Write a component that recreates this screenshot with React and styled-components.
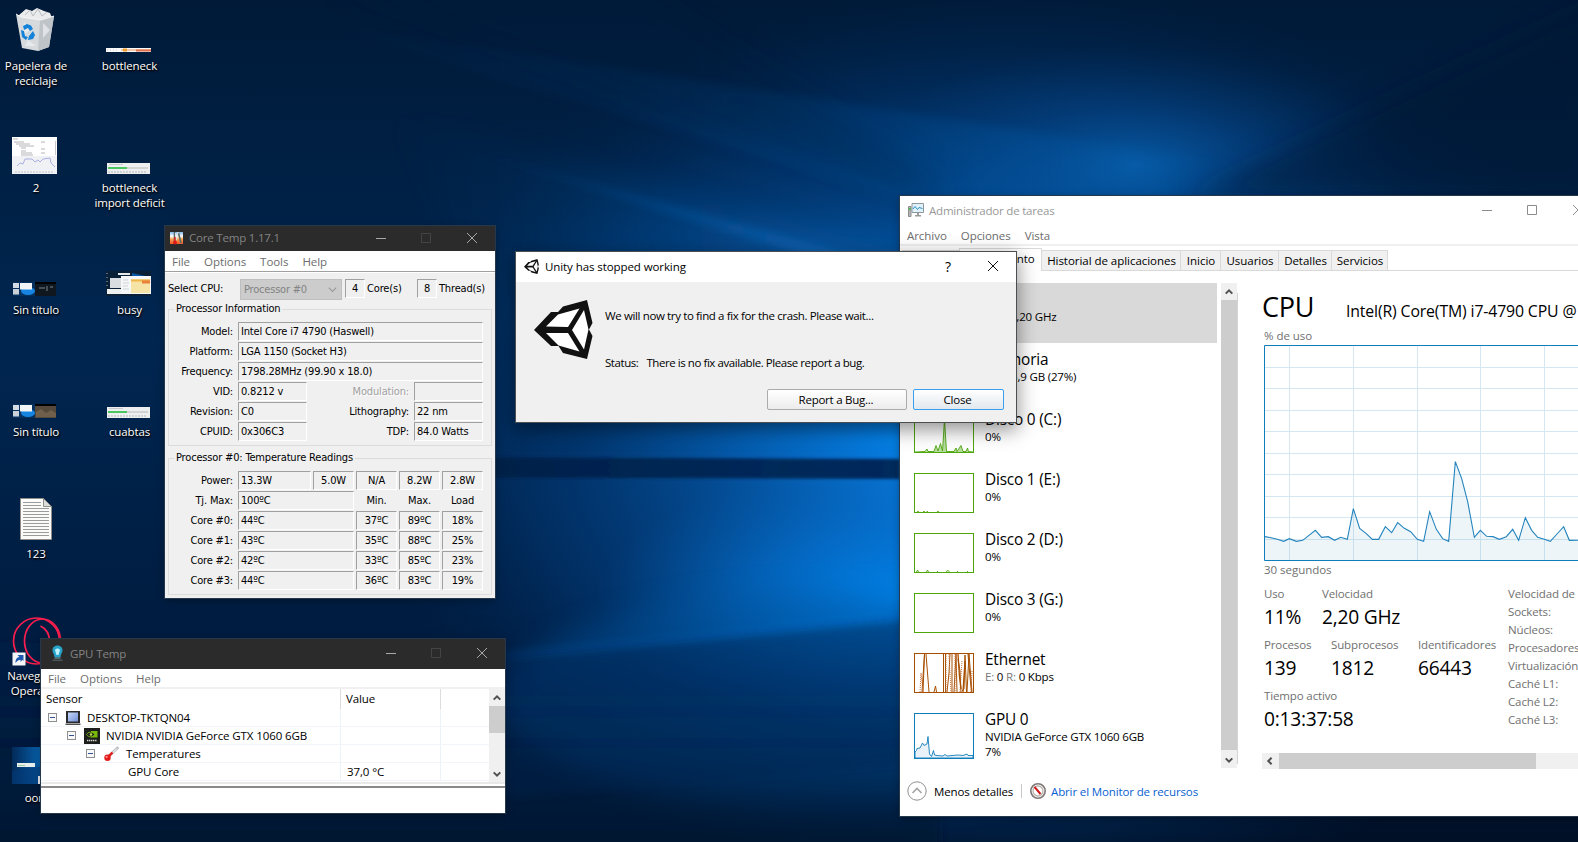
import React from "react";
import styled, { createGlobalStyle, css } from "styled-components";

const GlobalStyle = createGlobalStyle`
  *, *::before, *::after { box-sizing: border-box; }
  html, body { margin: 0; padding: 0; overflow: hidden; background: #001530; }
`;

const segoe = (size) => css`
  font-family: "Open Sans", "Noto Sans", sans-serif;
  font-size: ${size * 0.96}px;
  letter-spacing: -0.012em;
`;

const tahoma = css`
  font-family: "DejaVu Sans Condensed", "DejaVu Sans", sans-serif;
  font-stretch: condensed;
  font-size: 11px;
  letter-spacing: -0.17px;
`;

/* ---------- desktop ---------- */

const Desktop = styled.div`
  position: relative;
  width: 1578px;
  height: 842px;
  overflow: hidden;
  white-space: nowrap;
  color: #000;
  ${segoe(12)}
`;

const WallpaperSvg = styled.svg`
  position: absolute;
  inset: 0;
  display: block;
`;

const IconGrid = styled.div`
  position: relative;
  display: grid;
  width: 187px;
  grid-template-columns: 71px 116px;
  grid-auto-rows: 122px;
  padding-top: 4px;
`;

const IconCell = styled.div`
  grid-column: ${(p) => p.$col};
  grid-row: ${(p) => p.$row};
  display: flex;
  flex-direction: column;
  align-items: center;
`;

const IconArt = styled.div`
  height: 48px;
  display: flex;
  align-items: flex-end;
  justify-content: center;
  margin-bottom: 6px;
  padding-right: ${(p) => p.$nudge}px;
  svg { display: block; overflow: visible; }
`;

const IconLabel = styled.div`
  color: #fff;
  line-height: 15px;
  text-align: center;
  white-space: pre;
  padding-left: 1px;
  text-shadow: 0 1px 2px #000, 1px 1px 2px rgba(0, 0, 0, 0.8);
`;

/* ---------- window parts ---------- */

const Window = styled.section`
  position: absolute;
  left: ${(p) => p.$x}px;
  top: ${(p) => p.$y}px;
  width: ${(p) => p.$w}px;
  height: ${(p) => p.$h}px;
  display: flex;
  flex-direction: column;
  background: ${(p) => p.$bg || "#fff"};
  box-shadow: 0 0 0 1px ${(p) => p.$edge || "#26384c"}, ${(p) => p.$shadow || "0 2px 8px rgba(0,0,0,0.35)"};
`;

const TitleBar = styled.header`
  flex: none;
  height: ${(p) => p.$h}px;
  padding-left: ${(p) => p.$pad}px;
  padding-right: ${(p) => p.$right}px;
  padding-bottom: 2px;
  display: flex;
  align-items: center;
  background: ${(p) => (p.$dark ? "#2b2b2b" : "#fff")};
  color: ${(p) => p.$color};
  svg { display: block; flex: none; }
`;

const Title = styled.span`
  flex: 1;
  margin-left: ${(p) => p.$gap}px;
  letter-spacing: ${(p) => p.$ls || "-0.018em"};
`;

const CaptionButtons = styled.div`
  display: flex;
  gap: 35px;
  svg:last-child { margin-left: 1px; }
`;

const MenuBar = styled.nav`
  flex: none;
  height: ${(p) => p.$h}px;
  padding-left: 7px;
  display: flex;
  align-items: center;
  gap: 14px;
  color: #6d6d6d;
  background: #fff;
  letter-spacing: -0.005em;
`;

const Caption = ({ kind, color = "#a9a9a9" }) => (
  <svg width="10" height="10" viewBox="0 0 10 10" fill="none" stroke={color}>
    {kind === "min" && <path d="M0 5.5H10" />}
    {kind === "max" && <path d="M.5 .5H9.5V9.5H.5Z" />}
    {kind === "close" && <path d="M0 0L10 10M10 0L0 10" />}
  </svg>
);

const Chevron = ({ dir = "up", color = "#505050", size = 8, weight = 2 }) => {
  const turn = { up: 0, right: 90, down: 180, left: 270 }[dir];
  return (
    <svg width={size} height={size} viewBox="0 0 8 8">
      <path d="M.7 5.6L4 2.3L7.3 5.6" fill="none" stroke={color} strokeWidth={weight} transform={`rotate(${turn} 4 4)`} />
    </svg>
  );
};

/* ---------- Core Temp ---------- */

const CoreRoot = styled.div`
  flex: 1;
  border-top: 1px solid #a0a0a0;
  box-shadow: inset 0 1px 0 #fff;
  padding: 6px 3px 0;
  ${tahoma}
`;

const SelectRow = styled.div`
  display: flex;
  align-items: center;
  height: 21px;
  margin-bottom: 3px;
`;

const Combo = styled.div`
  display: flex;
  align-items: center;
  justify-content: space-between;
  width: 102px;
  height: 21px;
  margin: 1px 3px 0 0;
  padding: 0 4px 0 3px;
  background: #ccc;
  border: 1px solid #bfbfbf;
  color: #838383;
  letter-spacing: -0.2px;
`;

const SelectLabel = styled.span`
  width: 72px;
`;

const CountLabel = styled.span`
  width: ${(p) => p.$w}px;
  padding-left: 2px;
`;

const Field = styled.div`
  height: 19px;
  width: ${(p) => (p.$w ? p.$w + "px" : "auto")};
  grid-column: ${(p) => (p.$span ? `span ${p.$span}` : "auto")};
  border: 1px solid;
  border-color: #a0a0a0 #fff #fff #a0a0a0;
  line-height: 18px;
  padding-left: ${(p) => (p.$center ? 0 : 2)}px;
  text-align: ${(p) => (p.$center ? "center" : "left")};
`;

const Group = styled.fieldset`
  margin: 0 0 ${(p) => p.$after}px;
  height: ${(p) => p.$h}px;
  min-width: 0;
  width: 324px;
  padding: 5px 0 0;
  border: 1px solid #dcdcdc;
  legend {
    margin-left: 5px;
    padding: 0 2px;
    height: 14px;
    line-height: 14px;
  }
`;

const FieldGrid = styled.div`
  display: grid;
  grid-template-columns: ${(p) => p.$cols};
  grid-auto-rows: 19px;
  gap: 1px 2px;
  padding-top: ${(p) => p.$top}px;
`;

const FieldLabel = styled.div`
  text-align: ${(p) => (p.$center ? "center" : "right")};
  padding-right: ${(p) => (p.$center ? 0 : 3)}px;
  line-height: 19px;
  color: ${(p) => (p.$off ? "#a0a0a0" : "inherit")};
  text-shadow: ${(p) => (p.$off ? "1px 1px 0 #fff" : "none")};
`;

const CORES = [
  ["Core #0:", "44ºC", "37ºC", "89ºC", "18%"],
  ["Core #1:", "43ºC", "35ºC", "88ºC", "25%"],
  ["Core #2:", "42ºC", "33ºC", "85ºC", "23%"],
  ["Core #3:", "44ºC", "36ºC", "83ºC", "19%"],
];

const CoreTempWindow = () => (
  <Window $x={165} $y={226} $w={330} $h={372} $bg="#f0f0f0">
    <TitleBar $dark $h={25} $pad={5} $right={18} $color="#848484">
      <svg width="13" height="14" viewBox="0 0 13 14">
        <defs>
          <linearGradient id="ctl" x2="0" y2="1"><stop stopColor="#7db7e8" /><stop offset=".35" stopColor="#fff" /><stop offset=".6" stopColor="#f9a04c" /><stop offset="1" stopColor="#f0582c" /></linearGradient>
        </defs>
        <rect y="1" width="13" height="12" fill="url(#ctl)" />
        <path d="M4.500 1L4.500 10M8.500 2L11 12" stroke="#5b6a66" strokeWidth="1.600" />
        <path d="M5.700 2V10M8 1L6.500 9" stroke="#dfe9e6" />
        <path d="M5 6V11" stroke="#e01818" strokeWidth="1.400" />
        <circle cx="5" cy="11.500" r="1.900" fill="#e01818" />
      </svg>
      <Title $gap={6}>Core Temp 1.17.1</Title>
      <CaptionButtons>
        <Caption kind="min" />
        <Caption kind="max" color="#444" />
        <Caption kind="close" />
      </CaptionButtons>
    </TitleBar>
    <MenuBar $h={20}><span>File</span><span>Options</span><span>Tools</span><span>Help</span></MenuBar>
    <CoreRoot>
      <SelectRow>
        <SelectLabel>Select CPU:</SelectLabel>
        <Combo>Processor #0<Chevron dir="down" color="#9a9a9a" weight={1} size={9} /></Combo>
        <Field $w={20} $center>4</Field>
        <CountLabel $w={52}>Core(s)</CountLabel>
        <Field $w={20} $center>8</Field>
        <CountLabel $w={50}>Thread(s)</CountLabel>
      </SelectRow>
      <Group $h={144} $after={5}>
        <legend>Processor Information</legend>
        <FieldGrid $cols="67px 69px 103px 69px" $top={1}>
          <FieldLabel>Model:</FieldLabel><Field $span={3}>Intel Core i7 4790 (Haswell)</Field>
          <FieldLabel>Platform:</FieldLabel><Field $span={3}>LGA 1150 (Socket H3)</Field>
          <FieldLabel>Frequency:</FieldLabel><Field $span={3}>1798.28MHz (99.90 x 18.0)</Field>
          <FieldLabel>VID:</FieldLabel><Field>0.8212 v</Field>
          <FieldLabel $off>Modulation:</FieldLabel><Field />
          <FieldLabel>Revision:</FieldLabel><Field>C0</Field>
          <FieldLabel>Lithography:</FieldLabel><Field>22 nm</Field>
          <FieldLabel>CPUID:</FieldLabel><Field>0x306C3</Field>
          <FieldLabel>TDP:</FieldLabel><Field>84.0 Watts</Field>
        </FieldGrid>
      </Group>
      <Group $h={144} $after={0}>
        <legend>Processor #0: Temperature Readings</legend>
        <FieldGrid $cols="67px 73px 41px 41px 41px 41px" $top={1}>
          <FieldLabel>Power:</FieldLabel><Field>13.3W</Field>
          {["5.0W", "N/A", "8.2W", "2.8W"].map((v) => <Field $center key={v}>{v}</Field>)}
          <FieldLabel>Tj. Max:</FieldLabel><Field $span={2}>100ºC</Field>
          {["Min.", "Max.", "Load"].map((v) => <FieldLabel $center key={v}>{v}</FieldLabel>)}
          {CORES.map(([name, now, ...rest]) => (
            <React.Fragment key={name}>
              <FieldLabel>{name}</FieldLabel><Field $span={2}>{now}</Field>
              {rest.map((v) => <Field $center key={v}>{v}</Field>)}
            </React.Fragment>
          ))}
        </FieldGrid>
      </Group>
    </CoreRoot>
  </Window>
);

/* ---------- GPU Temp ---------- */

const TreeArea = styled.div`
  flex: none;
  display: flex;
  height: 95px;
  border-top: 2px solid #f0f0f0;
`;

const Tree = styled.div`
  flex: 1;
`;

const TreeRow = styled.div`
  display: grid;
  grid-template-columns: 300px 100px 48px;
  height: ${(p) => (p.$head ? 20 : 18)}px;
  border-bottom: ${(p) => (p.$head ? "none" : "1px solid #f1f4f8")};
`;

const TreeCell = styled.div`
  display: flex;
  align-items: center;
  padding-left: ${(p) => p.$pad}px;
  padding-bottom: ${(p) => (p.$head ? 1 : 0)}px;
  border-right: ${(p) => (p.$last ? "none" : "1px solid " + (p.$head ? "#dcdcdc" : "#edf1f8"))};
  letter-spacing: -0.009em;
  svg { flex: none; }
`;

const Expander = styled.span`
  position: relative;
  width: 9px;
  height: 9px;
  border: 1px solid #8e8f8f;
  background: #f8f8f8;
  &::after { content: ""; position: absolute; left: 1px; top: 3px; width: 5px; height: 1px; background: #33508f; }
`;

const TreeText = styled.span`
  margin-left: ${(p) => p.$gap}px;
`;

const VScroll = styled.div`
  width: ${(p) => p.$w}px;
  height: ${(p) => p.$h}px;
  flex: none;
  display: flex;
  flex-direction: column;
  justify-content: space-between;
  align-items: center;
  background: #f0f0f0;
  svg { display: block; margin: 5px 0 4px; }
`;

const VThumb = styled.div`
  width: 100%;
  height: ${(p) => p.$h}px;
  background: #cdcdcd;
`;

const Spring = styled.div`
  flex: 1;
`;

const Splitter = styled.div`
  flex: none;
  height: 6px;
  background: #fff;
  border-top: 2px solid #e9e9e9;
  border-bottom: 2px solid #8a8a8a;
`;

const PcIcon = () => (
  <svg width="16" height="16" viewBox="0 0 16 16">
    <defs><linearGradient id="scr" x2="1" y2="1"><stop stopColor="#c9d9fb" /><stop offset="1" stopColor="#6f8fd6" /></linearGradient></defs>
    <rect x="1" y="1" width="14" height="12" fill="#2a2a2c" />
    <rect x="3" y="2.500" width="10" height="9" fill="url(#scr)" />
    <path d="M.5 13.500H15.500V15H.5Z" fill="#4c4c4c" />
  </svg>
);

const NvidiaIcon = () => (
  <svg width="16" height="16" viewBox="0 0 16 16">
    <rect width="16" height="16" fill="#1b1e1a" />
    <rect x="7" y="3" width="6.500" height="6.500" fill="#76b900" />
    <path d="M2.500 6.500C4 3.800 8 3.200 11 6.300C9 9.500 4.500 9.800 2.500 6.500Z" fill="#1b1e1a" stroke="#8fd014" strokeWidth=".8" />
    <circle cx="7" cy="6.500" r="1.300" fill="#b5e04f" />
    <path d="M3 12.500H13" stroke="#d8d8d8" strokeWidth="1.500" strokeDasharray="1.300 .6" />
  </svg>
);

const ThermoIcon = () => (
  <svg width="17" height="16" viewBox="0 0 17 16">
    <path d="M6 10L14.500 2" stroke="#b9bdc2" strokeWidth="2.800" strokeLinecap="round" />
    <path d="M8 8.500L14 2.500" stroke="#fff" strokeWidth="1" />
    <path d="M4 12L9.500 6.500" stroke="#e31b1b" strokeWidth="2.400" />
    <circle cx="4.500" cy="11.700" r="3.200" fill="#e31b1b" />
    <circle cx="3.600" cy="10.900" r="1.100" fill="#ff8d8d" />
  </svg>
);

const GpuTempWindow = () => (
  <Window $x={41} $y={639} $w={464} $h={174}>
    <TitleBar $dark $h={30} $pad={10} $right={18} $color="#848484">
      <svg width="13" height="16" viewBox="0 0 13 16">
        <path d="M1.500 5C1.500 -1 11.500 -1 11.500 5C11.500 8 10 8 9.500 12H3.500C3 8 1.500 8 1.500 5Z" fill="#27a3c9" />
        <path d="M4 5C5 3 8 3 9 5L7.500 10H5.500Z" fill="#baf3ff" />
        <path d="M3.500 12H9.500V14H3.500Z" fill="#4d6f78" /><path d="M1.500 15.200H11.500" stroke="#5d6a6e" />
      </svg>
      <Title $gap={6} $ls="-0.01em">GPU Temp</Title>
      <CaptionButtons>
        <Caption kind="min" />
        <Caption kind="max" color="#444" />
        <Caption kind="close" />
      </CaptionButtons>
    </TitleBar>
    <MenuBar $h={18}><span>File</span><span>Options</span><span>Help</span></MenuBar>
    <TreeArea>
      <Tree>
        <TreeRow $head>
          <TreeCell $pad={5} $head>Sensor</TreeCell>
          <TreeCell $pad={5} $head>Value</TreeCell>
          <TreeCell $last />
        </TreeRow>
        <TreeRow><TreeCell $pad={7}><Expander /><TreeText $gap={8} /><PcIcon /><TreeText $gap={6}>DESKTOP-TKTQN04</TreeText></TreeCell><TreeCell /><TreeCell $last /></TreeRow>
        <TreeRow><TreeCell $pad={26}><Expander /><TreeText $gap={8} /><NvidiaIcon /><TreeText $gap={6}>NVIDIA NVIDIA GeForce GTX 1060 6GB</TreeText></TreeCell><TreeCell /><TreeCell $last /></TreeRow>
        <TreeRow><TreeCell $pad={45}><Expander /><TreeText $gap={8} /><ThermoIcon /><TreeText $gap={6}>Temperatures</TreeText></TreeCell><TreeCell /><TreeCell $last /></TreeRow>
        <TreeRow><TreeCell $pad={87}>GPU Core</TreeCell><TreeCell $pad={6}>37,0 °C</TreeCell><TreeCell $last /></TreeRow>
      </Tree>
      <VScroll $w={16} $h={93}>
        <Chevron dir="up" />
        <VThumb $h={27} />
        <Spring />
        <Chevron dir="down" />
      </VScroll>
    </TreeArea>
    <Splitter />
  </Window>
);

/* ---------- Task Manager ---------- */

const Tabs = styled.div`
  flex: none;
  display: flex;
  align-items: flex-end;
  height: 27px;
  padding-left: 2px;
  border-top: 2px solid #f0f0f0;
  border-bottom: 1px solid #d9d9d9;
`;

const Tab = styled.div`
  width: ${(p) => p.$w}px;
  height: ${(p) => (p.$active ? 23 : 20)}px;
  margin-bottom: ${(p) => (p.$active ? -1 : 0)}px;
  flex: none;
  display: flex;
  align-items: center;
  justify-content: center;
  padding-bottom: ${(p) => (p.$active ? 3 : 0)}px;
  background: ${(p) => (p.$active ? "#fff" : "#f0f0f0")};
  border: 1px solid #d9d9d9;
  border-left-width: ${(p) => (p.$first ? 1 : 0)}px;
  border-bottom-width: 0;
  padding-left: ${(p) => (p.$active ? 0 : 1)}px;
  letter-spacing: -0.004em;
`;

const TmBody = styled.div`
  flex: none;
  display: flex;
  height: 498px;
  padding: 12px 0 0 5px;
`;

const PerfList = styled.div`
  flex: none;
  width: 312px;
  margin-right: 4px;
`;

const PerfItem = styled.div`
  display: flex;
  height: 60px;
  padding: 10px 0 0 9px;
  background: ${(p) => (p.$selected ? "#d9d9d9" : "transparent")};
`;

const PerfText = styled.div`
  padding-left: 11px;
  margin-top: -3px;
  line-height: 15px;
  letter-spacing: -0.016em;
`;

const PerfName = styled.div`
  ${segoe(16)}
  line-height: 20px;
  height: 19px;
`;

const Faint = styled.span`
  color: #777;
`;

const ThumbSvg = styled.svg`
  flex: none;
  display: block;
`;

const Thumb = ({ color, h = 40, children }) => (
  <ThumbSvg width="60" height={h} viewBox={`0 0 60 ${h}`}>
    <rect x=".5" y=".5" width="59" height={h - 1} fill="#fff" />
    {children}
    <rect x=".5" y=".5" width="59" height={h - 1} fill="none" stroke={color} />
  </ThumbSvg>
);

const Divider = styled.div`
  flex: none;
  width: 1px;
  height: 471px;
  margin: 10px 25px 0 0;
  background: #d4d4d4;
`;

const Detail = styled.div`
  flex: none;
  width: 400px;
  display: flex;
  flex-direction: column;
`;

const DetailHead = styled.div`
  display: flex;
  align-items: baseline;
  height: 46px;
  line-height: 48px;
`;

const Heading = styled.span`
  width: 84px;
  margin-left: -1px;
  ${segoe(28.2)}
`;

const Model = styled.span`
  ${segoe(16.5)}
  letter-spacing: -0.009em;
`;

const AxisText = styled.div`
  color: #707070;
  height: ${(p) => p.$h}px;
  line-height: ${(p) => p.$lh}px;
  padding-left: 1px;
  letter-spacing: -0.003em;
`;

const ChartRow = styled.div`
  padding-left: 1px;
  height: 216px;
`;

const ChartSvg = styled.svg`
  display: block;
`;

const Stats = styled.div`
  display: flex;
  height: 173px;
  padding-left: 1px;
`;

const StatBlock = styled.div`
  width: 244px;
`;

const StatRow = styled.div`
  display: flex;
  height: 51px;
`;

const Stat = styled.div`
  width: ${(p) => p.$w}px;
  flex: none;
  color: #707070;
  line-height: 18px;
`;

const StatValue = styled.div`
  color: #000;
  ${segoe(20)}
  line-height: 28px;
`;

const SpecList = styled.div`
  color: #707070;
  line-height: 18px;
`;

const HScroll = styled.div`
  display: flex;
  align-items: center;
  width: 420px;
  height: 16px;
  margin-top: -1px;
  margin-left: -1px;
  padding-left: 4px;
  background: #f0f0f0;
`;

const HThumb = styled.div`
  width: 257px;
  height: 16px;
  margin-left: 5px;
  background: #cdcdcd;
`;

const Footer = styled.footer`
  flex: 1;
  display: flex;
  align-items: center;
  padding: 0 0 3px 7px;
  svg { display: block; flex: none; }
`;

const FooterText = styled.span`
  width: 94px;
  padding-left: 7px;
  letter-spacing: -0.012em;
`;

const FooterRule = styled.span`
  width: 1px;
  height: 14px;
  background: #c9c9c9;
  margin-right: 8px;
`;

const FooterLink = styled.a`
  margin-left: 5px;
  color: #0a5fd0;
  letter-spacing: -0.012em;
`;

const CPU_POINTS =
  "90,1040 108,1043 127,1048 146,1054 163,1046 184,1054 203,1051 222,1036 241,1021 260,1042 280,1040 299,1051 317,1042 337,1048 355,956 374,1015 393,1030 412,1048 431,1048 451,1010 470,1028 488,998 508,1015 527,1025 547,1048 566,1054 584,965 604,1018 623,1046 641,1054 661,815 680,866 698,935 718,1042 736,1021 755,1039 774,1040 793,1048 814,1040 833,1018 851,1051 871,983 890,1021 908,1042 928,1048 946,1054 966,1032 986,1010 1003,1051 1080,1050";

const CpuChart = () => (
  <ChartSvg width="330" height="216" viewBox="87 465 990 648">
    <rect x="87" y="465" width="1000" height="648" fill="#fff" />
    <g stroke="#d5e7f3" strokeWidth="3">
      {[163.5, 355.5, 547.5, 736.5, 928.5].map((x) => <path key={x} d={`M${x} 465V1113`} />)}
      {[532.5, 595.5, 661.5, 724.5, 790.5, 853.5, 919.5, 982.5, 1048.5].map((y) => <path key={y} d={`M87 ${y}H1080`} />)}
    </g>
    <polygon points={`90,1112 ${CPU_POINTS} 1080,1112`} fill="#1b74b0" fillOpacity=".075" />
    <polyline points={CPU_POINTS} fill="none" stroke="#2384bd" strokeWidth="3.300" />
    <path d="M1080 466.500H88.500V1111.500H1080" fill="none" stroke="#117dbb" strokeWidth="3" />
  </ChartSvg>
);

const TaskManagerWindow = () => (
  <Window $x={900} $y={196} $w={720} $h={620}>
    <TitleBar $h={30} $pad={8} $right={37} $color="#999">
      <svg width="16" height="14" viewBox="0 0 16 14">
        <path d="M.5 3.500H3V13.500H.5Z" fill="#b5b5b5" stroke="#8e8e8e" />
        <circle cx="1.700" cy="6" r="1" fill="#35c03a" />
        <path d="M4 .5H15.500V9.500H4Z" fill="#dff1fb" stroke="#8e979c" />
        <path d="M5 6L7 3.500L9.500 6.500L11 4.500L14.500 5.500" fill="none" stroke="#2d8fc6" />
        <path d="M9 10H11V12H13V13.500H7V12H9Z" fill="#9a9a9a" />
      </svg>
      <Title $gap={5} $ls="-0.018em">Administrador de tareas</Title>
      <CaptionButtons>
        <Caption kind="min" color="#8c8c8c" />
        <Caption kind="max" color="#8c8c8c" />
        <Caption kind="close" color="#8c8c8c" />
      </CaptionButtons>
    </TitleBar>
    <MenuBar $h={18}><span>Archivo</span><span>Opciones</span><span>Vista</span></MenuBar>
    <Tabs>
      <Tab $w={57} $first>Procesos</Tab>
      <Tab $w={83} $active $first>Rendimiento</Tab>
      <Tab $w={139}>Historial de aplicaciones</Tab>
      <Tab $w={40}>Inicio</Tab>
      <Tab $w={58}>Usuarios</Tab>
      <Tab $w={53}>Detalles</Tab>
      <Tab $w={56}>Servicios</Tab>
    </Tabs>
    <TmBody>
      <PerfList>
        <PerfItem $selected>
          <Thumb color="#117dbb" />
          <PerfText><PerfName>CPU</PerfName>11%  2,20 GHz</PerfText>
        </PerfItem>
        <PerfItem>
          <Thumb color="#8b12ae" />
          <PerfText><PerfName>Memoria</PerfName>4,3/15,9 GB (27%)</PerfText>
        </PerfItem>
        <PerfItem>
          <Thumb color="#4da60c">
            <path d="M1 39L11 38.500L13 36L14 38.500L20 38.500L22 32.500L24 38L26.500 30.500L28.500 38L30.500 6L32.500 38.500L40 38.500L42 35L43 38.500L47 32.500L49 38.500L52 38.500L53.500 35L54.500 38.500L59 39" fill="#b8dda0" stroke="#4da60c" strokeWidth=".9" />
          </Thumb>
          <PerfText><PerfName>Disco 0 (C:)</PerfName>0%</PerfText>
        </PerfItem>
        <PerfItem>
          <Thumb color="#4da60c"><path d="M3 38.500H5M9 38.500H11M12.500 38.500H14M23 38.500H25" stroke="#4da60c" strokeWidth=".8" /></Thumb>
          <PerfText><PerfName>Disco 1 (E:)</PerfName>0%</PerfText>
        </PerfItem>
        <PerfItem>
          <Thumb color="#4da60c"><path d="M2.500 39L3.500 37L4.500 39M12.500 39L13.500 37L14.500 39M23 38.500H24M32.500 39L33.500 37L35.500 39M43 38.500H44M53 38.500H54" fill="none" stroke="#4da60c" strokeWidth=".9" /></Thumb>
          <PerfText><PerfName>Disco 2 (D:)</PerfName>0%</PerfText>
        </PerfItem>
        <PerfItem>
          <Thumb color="#4da60c" />
          <PerfText><PerfName>Disco 3 (G:)</PerfName>0%</PerfText>
        </PerfItem>
        <PerfItem>
          <Thumb color="#a74f01">
            <g fill="none" stroke="#a74f01">
              <path d="M8 39L10.500 1M12 1L15 39M10.500 1L9 39" fill="#f7e2d4" />
              <path d="M20 39L21.500 33L22.500 39" />
              <path d="M29.500 1V39M31.500 1V39M33 39L35 20L36 1M38 1V39M40 39L42 1L43 39M44 6L46 18L47 39M48 38L50 36L51 2L52.500 39M54 1L56 24L57.500 39M53 39L55 1L58 39" />
              <path d="M6 39L7 20L9 39M32 1V39M35 1L37 39M41 1V39M42.500 1V20M46 39L48 8M57 39L58 18" strokeDasharray="1 1" stroke="#c9713c" />
              <path d="M44 1L45.500 24L47 36M49 39L51 8" strokeWidth="1.300" />
            </g>
          </Thumb>
          <PerfText><PerfName>Ethernet</PerfName><Faint>E:</Faint> 0 <Faint>R:</Faint> 0 Kbps</PerfText>
        </PerfItem>
        <PerfItem>
          <Thumb color="#117dbb" h={46}>
            <path d="M1 39L2.500 37.500L3 35.500L6 35L7 33L8.500 30L10 32.500L13 31L14 23.500L15.500 41L17.500 43.500L19.500 37.500L20.500 42L23 42.500L29 43L31 41.500L33 43L44 42L49 42.500L53 41L54 42.500H59V45H1Z" fill="#e9f2f8" stroke="#117dbb" strokeWidth=".9" />
          </Thumb>
          <PerfText><PerfName>GPU 0</PerfName>NVIDIA GeForce GTX 1060 6GB<br />7%</PerfText>
        </PerfItem>
      </PerfList>
      <VScroll $w={16} $h={485}>
        <Chevron dir="up" />
        <VThumb $h={450} />
        <Spring />
        <Chevron dir="down" />
      </VScroll>
      <Divider />
      <Detail>
        <DetailHead><Heading>CPU</Heading><Model>Intel(R) Core(TM) i7-4790 CPU @</Model></DetailHead>
        <AxisText $h={16} $lh={14}>% de uso</AxisText>
        <ChartRow><CpuChart /></ChartRow>
        <AxisText $h={25} $lh={18}>30 segundos</AxisText>
        <Stats>
          <StatBlock>
            <StatRow>
              <Stat $w={58}>Uso<StatValue>11%</StatValue></Stat>
              <Stat $w={100}>Velocidad<StatValue>2,20 GHz</StatValue></Stat>
            </StatRow>
            <StatRow>
              <Stat $w={67}>Procesos<StatValue>139</StatValue></Stat>
              <Stat $w={87}>Subprocesos<StatValue>1812</StatValue></Stat>
              <Stat $w={90}>Identificadores<StatValue>66443</StatValue></Stat>
            </StatRow>
            <StatRow>
              <Stat $w={120}>Tiempo activo<StatValue>0:13:37:58</StatValue></Stat>
            </StatRow>
          </StatBlock>
          <SpecList>
            {["Velocidad de", "Sockets:", "Núcleos:", "Procesadores", "Virtualización", "Caché L1:", "Caché L2:", "Caché L3:"].map((t) => <div key={t}>{t}</div>)}
          </SpecList>
        </Stats>
        <HScroll><Chevron dir="left" /><HThumb /></HScroll>
      </Detail>
    </TmBody>
    <Footer>
      <svg width="20" height="20" viewBox="0 0 20 20" fill="none">
        <circle cx="10" cy="10" r="9.200" stroke="#8f8f8f" />
        <path d="M5.500 12L10 7.500L14.500 12" stroke="#a5a5a5" strokeWidth="1.600" />
      </svg>
      <FooterText>Menos detalles</FooterText>
      <FooterRule />
      <svg width="16" height="16" viewBox="0 0 16 16">
        <circle cx="8" cy="8" r="7.200" fill="#fff" stroke="#7d7775" strokeWidth="1.600" />
        <circle cx="8" cy="8" r="5" fill="none" stroke="#b9b2ae" strokeWidth="1.300" />
        <path d="M4.500 3.800L10.500 11" stroke="#d01717" strokeWidth="2" />
      </svg>
      <FooterLink>Abrir el Monitor de recursos</FooterLink>
    </Footer>
  </Window>
);

/* ---------- Unity crash dialog ---------- */

const UnityMark = ({ size }) => (
  <svg width={size} height={size} viewBox="0 0 59 59">
    <path d="M0 30L17 12H24L29 6.500L53 0L58.500 23L55 29.500L58.500 36L53 59L29 53L24.500 46H17Z" fill="#111" />
    <path d="M12 26.500L24 14.500L45.500 8.500L34 27Z" fill="#fff" />
    <path d="M12 33H34L45.500 51.500L24.500 45.500Z" fill="#fff" />
    <path d="M38 30L50 10L54.500 29.500L50 49.500Z" fill="#fff" />
  </svg>
);

const DialogBody = styled.div`
  flex: 1;
  display: flex;
  background: #f0f0f0;
  padding: 18px 12px 0 18px;
  svg { display: block; flex: none; }
`;

const DialogContent = styled.div`
  flex: 1;
  padding: 6px 0 0 12px;
`;

const Message = styled.div`
  height: 47px;
  line-height: 20px;
  display: flex;
  gap: 8px;
  font-size: 11.5px;
  letter-spacing: ${(p) => p.$ls};
`;

const DialogActions = styled.div`
  display: flex;
  justify-content: flex-end;
  gap: 6px;
  margin-top: -11px;
`;

const DialogButton = styled.button`
  width: ${(p) => p.$w}px;
  height: 21px;
  padding: 0 2px 0 0;
  border: 1px solid ${(p) => (p.$focus ? "#3a9fee" : "#ababab")};
  border-radius: 2px;
  background: linear-gradient(#fff, ${(p) => (p.$focus ? "#e1e8ee" : "#ececec")});
  ${segoe(12)}
  letter-spacing: -0.25px;
  color: #000;
`;

const HelpMark = styled.span`
  font-size: 14px;
  margin-right: 37px;
`;

const UnityDialog = () => (
  <Window $x={516} $y={252} $w={500} $h={170} $edge="#4c4f52" $shadow="0 6px 18px 2px rgba(0,0,0,0.42)">
    <TitleBar $h={30} $pad={8} $right={18} $color="#000">
      <UnityMark size={15} />
      <Title $gap={6} $ls="-0.008em">Unity has stopped working</Title>
      <HelpMark>?</HelpMark>
      <Caption kind="close" color="#111" />
    </TitleBar>
    <DialogBody>
      <UnityMark size={59} />
      <DialogContent>
        <Message $ls="-0.032em">We will now try to find a fix for the crash. Please wait...</Message>
        <Message $ls="-0.038em"><span>Status:</span><span>There is no fix available. Please report a bug.</span></Message>
        <DialogActions>
          <DialogButton $w={140}>Report a Bug...</DialogButton>
          <DialogButton $w={91} $focus>Close</DialogButton>
        </DialogActions>
      </DialogContent>
    </DialogBody>
  </Window>
);

/* ---------- wallpaper ---------- */

const Wallpaper = () => (
  <WallpaperSvg width="1578" height="842" viewBox="0 0 1578 842">
    <defs>
      <linearGradient id="base" x2="0" y2="1">
        <stop stopColor="#001a38" /><stop offset=".4" stopColor="#002650" /><stop offset=".75" stopColor="#001c40" /><stop offset="1" stopColor="#001027" />
      </linearGradient>
      <radialGradient id="glow" gradientUnits="userSpaceOnUse" cx="1010" cy="430" r="640" gradientTransform="translate(0 135) scale(1 .72)">
        <stop stopColor="#0a8af0" /><stop offset=".2" stopColor="#0773d2" /><stop offset=".45" stopColor="#0453a0" stopOpacity=".9" /><stop offset=".75" stopColor="#023a78" stopOpacity=".55" /><stop offset="1" stopColor="#002650" stopOpacity="0" />
      </radialGradient>
      <radialGradient id="spot"><stop stopColor="#0a6cc0" /><stop offset=".5" stopColor="#07509a" stopOpacity=".5" /><stop offset="1" stopColor="#07407c" stopOpacity="0" /></radialGradient>
      <radialGradient id="low"><stop stopColor="#0090ff" /><stop offset=".5" stopColor="#0478dc" stopOpacity=".6" /><stop offset="1" stopColor="#0560b4" stopOpacity="0" /></radialGradient>
      <linearGradient id="floor" x2="0" y2="1"><stop stopColor="#003468" stopOpacity=".1" /><stop offset=".5" stopColor="#002450" stopOpacity=".35" /><stop offset=".85" stopColor="#001533" stopOpacity=".85" /><stop offset="1" stopColor="#001128" /></linearGradient>
      <linearGradient id="beam"><stop stopColor="#0c62b4" stopOpacity="0" /><stop offset="1" stopColor="#1380dc" stopOpacity=".55" /></linearGradient>
      <linearGradient id="ray"><stop stopColor="#0c62b4" stopOpacity="0" /><stop offset=".75" stopColor="#0c6cc4" stopOpacity=".5" /><stop offset="1" stopColor="#0c6cc4" stopOpacity="0" /></linearGradient>
      <linearGradient id="bar" gradientUnits="userSpaceOnUse" x1="160" x2="900"><stop stopColor="#00204a" stopOpacity="0" /><stop offset=".4" stopColor="#001c42" stopOpacity=".85" /><stop offset="1" stopColor="#00295c" /></linearGradient>
      <filter id="b1" filterUnits="userSpaceOnUse" x="0" y="430" width="1000" height="70"><feGaussianBlur stdDeviation="1.500" /></filter>
      <filter id="b4" x="-20%" y="-20%" width="140%" height="140%"><feGaussianBlur stdDeviation="4" /></filter>
      <filter id="b14" x="-20%" y="-20%" width="140%" height="140%"><feGaussianBlur stdDeviation="14" /></filter>
    </defs>
    <rect width="1578" height="842" fill="url(#base)" />
    <rect width="1578" height="842" fill="url(#glow)" />
    <ellipse cx="1135" cy="165" rx="270" ry="120" fill="url(#spot)" opacity=".65" />
    <path d="M330 -20L620 -20L960 190L900 196Z" fill="#001c3c" opacity=".35" filter="url(#b14)" />
    <path d="M1180 200L1600 0V200Z" fill="#001630" opacity=".5" filter="url(#b14)" />
    <path d="M300 20L1250 165L1250 205H920Z" fill="url(#ray)" opacity=".35" filter="url(#b4)" />
    <path d="M380 110L900 252V420L500 330Z" fill="url(#beam)" opacity=".45" filter="url(#b14)" />
    <path d="M440 142L900 268V285Z" fill="url(#beam)" opacity=".8" filter="url(#b4)" />
    <ellipse cx="895" cy="598" rx="300" ry="130" fill="url(#low)" opacity=".8" />
    <ellipse cx="900" cy="440" rx="320" ry="55" fill="url(#low)" opacity=".4" />
    <ellipse cx="840" cy="700" rx="340" ry="110" fill="#04549e" opacity=".4" filter="url(#b14)" />
    <path d="M160 456L900 459V479L160 476Z" fill="url(#bar)" filter="url(#b1)" />
    <path d="M480 662L940 615V880H-40V640Z" fill="url(#floor)" filter="url(#b4)" />
    <path d="M480 664L940 617V760L480 800Z" fill="#00244e" opacity=".35" filter="url(#b4)" />
    <path d="M500 656L900 616" stroke="#1380dc" strokeWidth="3" opacity=".3" filter="url(#b4)" />
  </WallpaperSvg>
);

/* ---------- desktop icons ---------- */

const RecycleBin = () => (
  <svg width="38" height="44" viewBox="0 0 38 44">
    <path d="M3 7L10 1L16 3L21 0L28 3L34 5L36 10L20 14L3 10Z" fill="#e9ebec" />
    <path d="M9 7L14 2L17 8L22 1L26 8L31 4" fill="none" stroke="#b9bdc1" />
    <path d="M0 6L5 9L25 12L38 8L33 39L22 43L6 40Z" fill="#d6dadd" />
    <path d="M24 12L38 8L33 39L22 43Z" fill="#bfc4c8" />
    <path d="M8 14L14 22L6 28ZM27 15L34 22L27 30ZM12 32L20 38L9 38Z" fill="#eef0f1" opacity=".7" />
    <path d="M0 6L5 9L25 12L38 8" fill="none" stroke="#f6f6f6" />
    <g fill="#1482d8">
      <path d="M7 18L11 16L15 17.500L17 21L14 23L12 20L8 22Z" /><path d="M5 22L8 23L9 28L12 29L10 32L6 29Z" /><path d="M13 28L17 23L19 27L17 31L12 32Z" />
    </g>
  </svg>
);

const ChartThumb = () => (
  <svg width="45" height="37" viewBox="0 0 45 37">
    <rect width="45" height="37" fill="#fff" /><rect y="19" width="45" height="18" fill="#f0f1f4" />
    <path d="M1 2H6M2 5H12M4 7H18M7 9H22M9 11H14M9 14H14M9 16H20M9 18H21M29 5H33M29 12H33M29 16H33" stroke="#a2a2a8" strokeWidth=".8" />
    <path d="M5 29L8 26L11 27L13 22L20 22L23 25L26 23L28 25L31 22L38 21L39 26L43 30" fill="none" stroke="#aab0e4" />
    <path d="M3 35H42" stroke="#c4c4c4" strokeDasharray="2 1" /><path d="M43.500 4V18" stroke="#c8c8c8" />
  </svg>
);

const ProgressThumb = () => (
  <svg width="43" height="11" viewBox="0 0 43 11">
    <rect width="43" height="11" fill="#eceeef" /><path d="M2 1.500H16" stroke="#c9c9c9" /><path d="M1 5H41" stroke="#d2d4d4" strokeWidth="2" />
    <path d="M1 5H20" stroke="#4cc560" strokeWidth="2" /><path d="M1 9H40" stroke="#b5b8ba" strokeDasharray="2 1" />
  </svg>
);

const DualThumb = ({ warm }) => (
  <svg width="43" height="14" viewBox="0 0 43 14">
    <rect width="22" height="14" fill="#06305e" /><ellipse cx="15" cy="9" rx="7" ry="4" fill="#1684e0" />
    <rect x="0" y="1" width="6" height="5" fill="#d4dbe2" /><rect x="0" y="7" width="6" height="5.500" fill="#c8d0d8" />
    <rect x="7" y="1" width="12" height="6.500" fill="#f2f4f5" />
    <rect x="22" width="21" height="14" fill={warm ? "#54493a" : "#10171f"} />
    {warm ? <path d="M23 8L28 5L33 9L38 6L43 9V13H23Z" fill="#7b6a52" opacity=".7" /> : <path d="M26 6H32M34 4V9M37 5H40" stroke="#59666e" strokeWidth="2" opacity=".7" />}
    <path d="M22 1H43" stroke="#000" strokeWidth="2" />
  </svg>
);

const DesktopIcon = ({ col, row, label, children }) => (
  <IconCell $col={col} $row={row}>
    <IconArt $nudge={col === 1 ? 2 : 1}>{children}</IconArt>
    <IconLabel>{label}</IconLabel>
  </IconCell>
);

const DesktopIcons = () => (
  <IconGrid>
    <DesktopIcon col={1} row={1} label={"Papelera de\nreciclaje"}><RecycleBin /></DesktopIcon>
    <DesktopIcon col={2} row={1} label="bottleneck">
      <svg width="45" height="4" viewBox="0 0 45 4"><rect width="45" height="4" fill="#fafafa" /><path d="M15 2H45" stroke="#f3c8aa" strokeWidth="2" /><path d="M30 2.500H45" stroke="#e0704c" strokeWidth="2" /><path d="M17 2H21" stroke="#f0a030" strokeWidth="3" /><path d="M1 2H12" stroke="#c8ccd0" strokeDasharray="1 2" /></svg>
    </DesktopIcon>
    <DesktopIcon col={1} row={2} label="2"><ChartThumb /></DesktopIcon>
    <DesktopIcon col={2} row={2} label={"bottleneck\nimport deficit"}><ProgressThumb /></DesktopIcon>
    <DesktopIcon col={1} row={3} label="Sin título"><DualThumb /></DesktopIcon>
    <DesktopIcon col={2} row={3} label="busy">
      <svg width="45" height="25" viewBox="0 0 45 25">
        <rect width="45" height="25" fill="#0a2036" /><path d="M26 2L44 6V14H26Z" fill="#0a58a8" /><rect x="12" y="2" width="12" height="2" fill="#e5e8ea" />
        <rect x="4" y="7" width="11" height="10" fill="#d9dde0" /><rect x="1" y="18" width="14" height="5" fill="#eef0f0" />
        <rect x="15" y="5" width="30" height="18" fill="#f6f7f8" /><rect x="25" y="8" width="19" height="14" fill="#f6e3a6" />
        <path d="M25 9.500H44" stroke="#efb64a" strokeWidth="2" /><path d="M36 11H44" stroke="#e8813a" strokeWidth="3" /><path d="M17 9H22M17 12H23M17 15H22M17 18H23" stroke="#cfd3d6" />
        <path d="M1 2V16" stroke="#a6b6c4" strokeDasharray="1 3" />
      </svg>
    </DesktopIcon>
    <DesktopIcon col={1} row={4} label="Sin título"><DualThumb warm /></DesktopIcon>
    <DesktopIcon col={2} row={4} label="cuabtas"><ProgressThumb /></DesktopIcon>
    <DesktopIcon col={1} row={5} label="123">
      <svg width="32" height="42" viewBox="-1 0 32 42">
        <path d="M.5 .5H23.500L31.500 8.500V41.500H.5Z" fill="#fbfbfa" stroke="#8f8e88" />
        <path d="M23.500 .5V8.500H31.500Z" fill="#dcdcd8" stroke="#8f8e88" />
        <path d="M3 4.500H21M3 7.500H21M3 10.500H29M3 13.500H29M3 16.500H29M3 19.500H29M3 22.500H29M3 25.500H29M3 28.500H29M3 31.500H29M3 34.500H29M3 37.500H29" stroke="#9b9b9b" />
      </svg>
    </DesktopIcon>
    <DesktopIcon col={1} row={6} label={"Navegador\nOpera GX"}>
      <svg width="48" height="48" viewBox="-1.5 0 48 48">
        <g fill="none" stroke="#fa1e4e" strokeWidth="1.700">
          <circle cx="24" cy="27" r="23" /><ellipse cx="30" cy="27" rx="18" ry="22" /><path d="M28 12C40 18 40 36 28 42" />
        </g>
        <rect y="38.500" width="13" height="13" fill="#f4f6f8" /><path d="M3 49C3 44 5 43 8 43V40.500L11 44.500L8 48V46C6 46 5 46.500 3 49ZM5 41H11V47" fill="#1c58b0" />
      </svg>
    </DesktopIcon>
    <DesktopIcon col={1} row={7} label="oorr">
      <svg width="45" height="37" viewBox="0 0 45 37">
        <defs><linearGradient id="oo"><stop stopColor="#022a58" /><stop offset="1" stopColor="#0a80dc" /></linearGradient></defs>
        <rect width="45" height="37" fill="url(#oo)" /><path d="M0 24L30 19L45 26V37H0Z" fill="#043a78" opacity=".6" />
        <rect x="5" y="16" width="18" height="4" fill="#e8eeee" /><path d="M6 18.500H13" stroke="#9ad0a0" /><rect x="26" y="29" width="8" height="8" fill="#e8eef4" />
      </svg>
    </DesktopIcon>
  </IconGrid>
);

export default function App() {
  return (
    <Desktop>
      <GlobalStyle />
      <Wallpaper />
      <DesktopIcons />
      <CoreTempWindow />
      <GpuTempWindow />
      <TaskManagerWindow />
      <UnityDialog />
    </Desktop>
  );
}
